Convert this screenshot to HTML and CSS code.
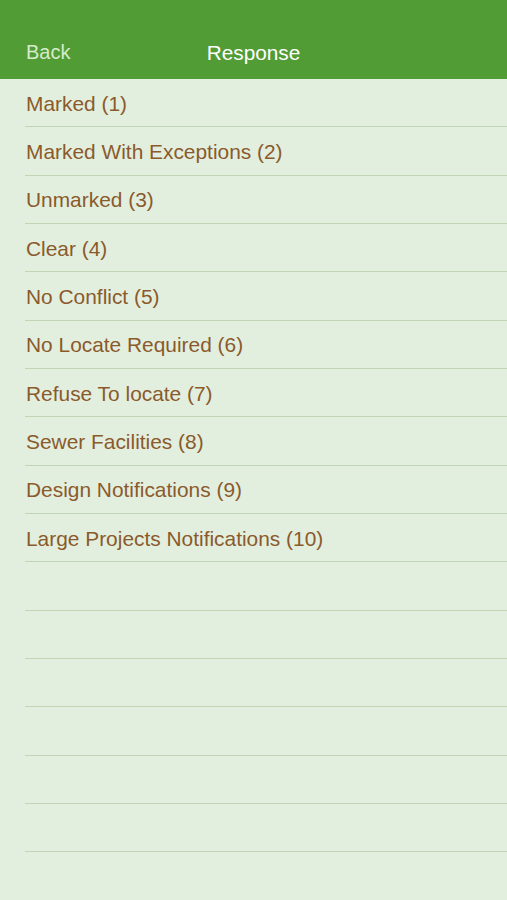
FILE: index.html
```html
<!DOCTYPE html>
<html lang="en">
<head>
    <meta charset="UTF-8">
    <title>Response</title>
    <link rel="stylesheet" href="styles.css">
</head>
<body>
<div id="page">
    <div id="nav">
        <a class="back">Back</a>
        <span class="title">Response</span>
    </div>
    <ul id="list">
        <li>Marked (1)</li>
        <li>Marked With Exceptions (2)</li>
        <li>Unmarked (3)</li>
        <li>Clear (4)</li>
        <li>No Conflict (5)</li>
        <li>No Locate Required (6)</li>
        <li>Refuse To locate (7)</li>
        <li>Sewer Facilities (8)</li>
        <li>Design Notifications (9)</li>
        <li>Large Projects Notifications (10)</li>
        <li></li>
        <li></li>
        <li></li>
        <li></li>
        <li></li>
        <li></li>
    </ul>
</div>
</body>
</html>
```

FILE: styles.css
```css
* {
    margin: 0;
    padding: 0;
    box-sizing: border-box;
}
a {
    text-decoration: none;
}
ul, li {
    list-style: none;
}
html, body {
    background-color: #e2efdf;
}
body {
    font-family: "Liberation Sans", Arial, sans-serif;
}
#page {
    width: 507px;
    height: 900px;
    overflow: hidden;
}
#nav {
    position: relative;
    height: 79px;
    padding-top: 26px;
    background-color: #529c35;
    display: flex;
    align-items: center;
}
#nav .back {
    padding-left: 26px;
    font-size: 20px;
    color: #d6ebcc;
}
#nav .title {
    position: absolute;
    left: 0;
    right: 0;
    top: 26px;
    bottom: 0;
    display: flex;
    align-items: center;
    justify-content: center;
    font-size: 20.8px;
    color: #ffffff;
    pointer-events: none;
}
#list {
    margin-left: 25px;
}
#list li {
    height: 48.33px;
    display: flex;
    align-items: center;
    padding-left: 1px;
    padding-top: 2px;
    border-bottom: 1px solid #bfd5b3;
    font-size: 20.9px;
    color: #8b5a2b;
}
```
